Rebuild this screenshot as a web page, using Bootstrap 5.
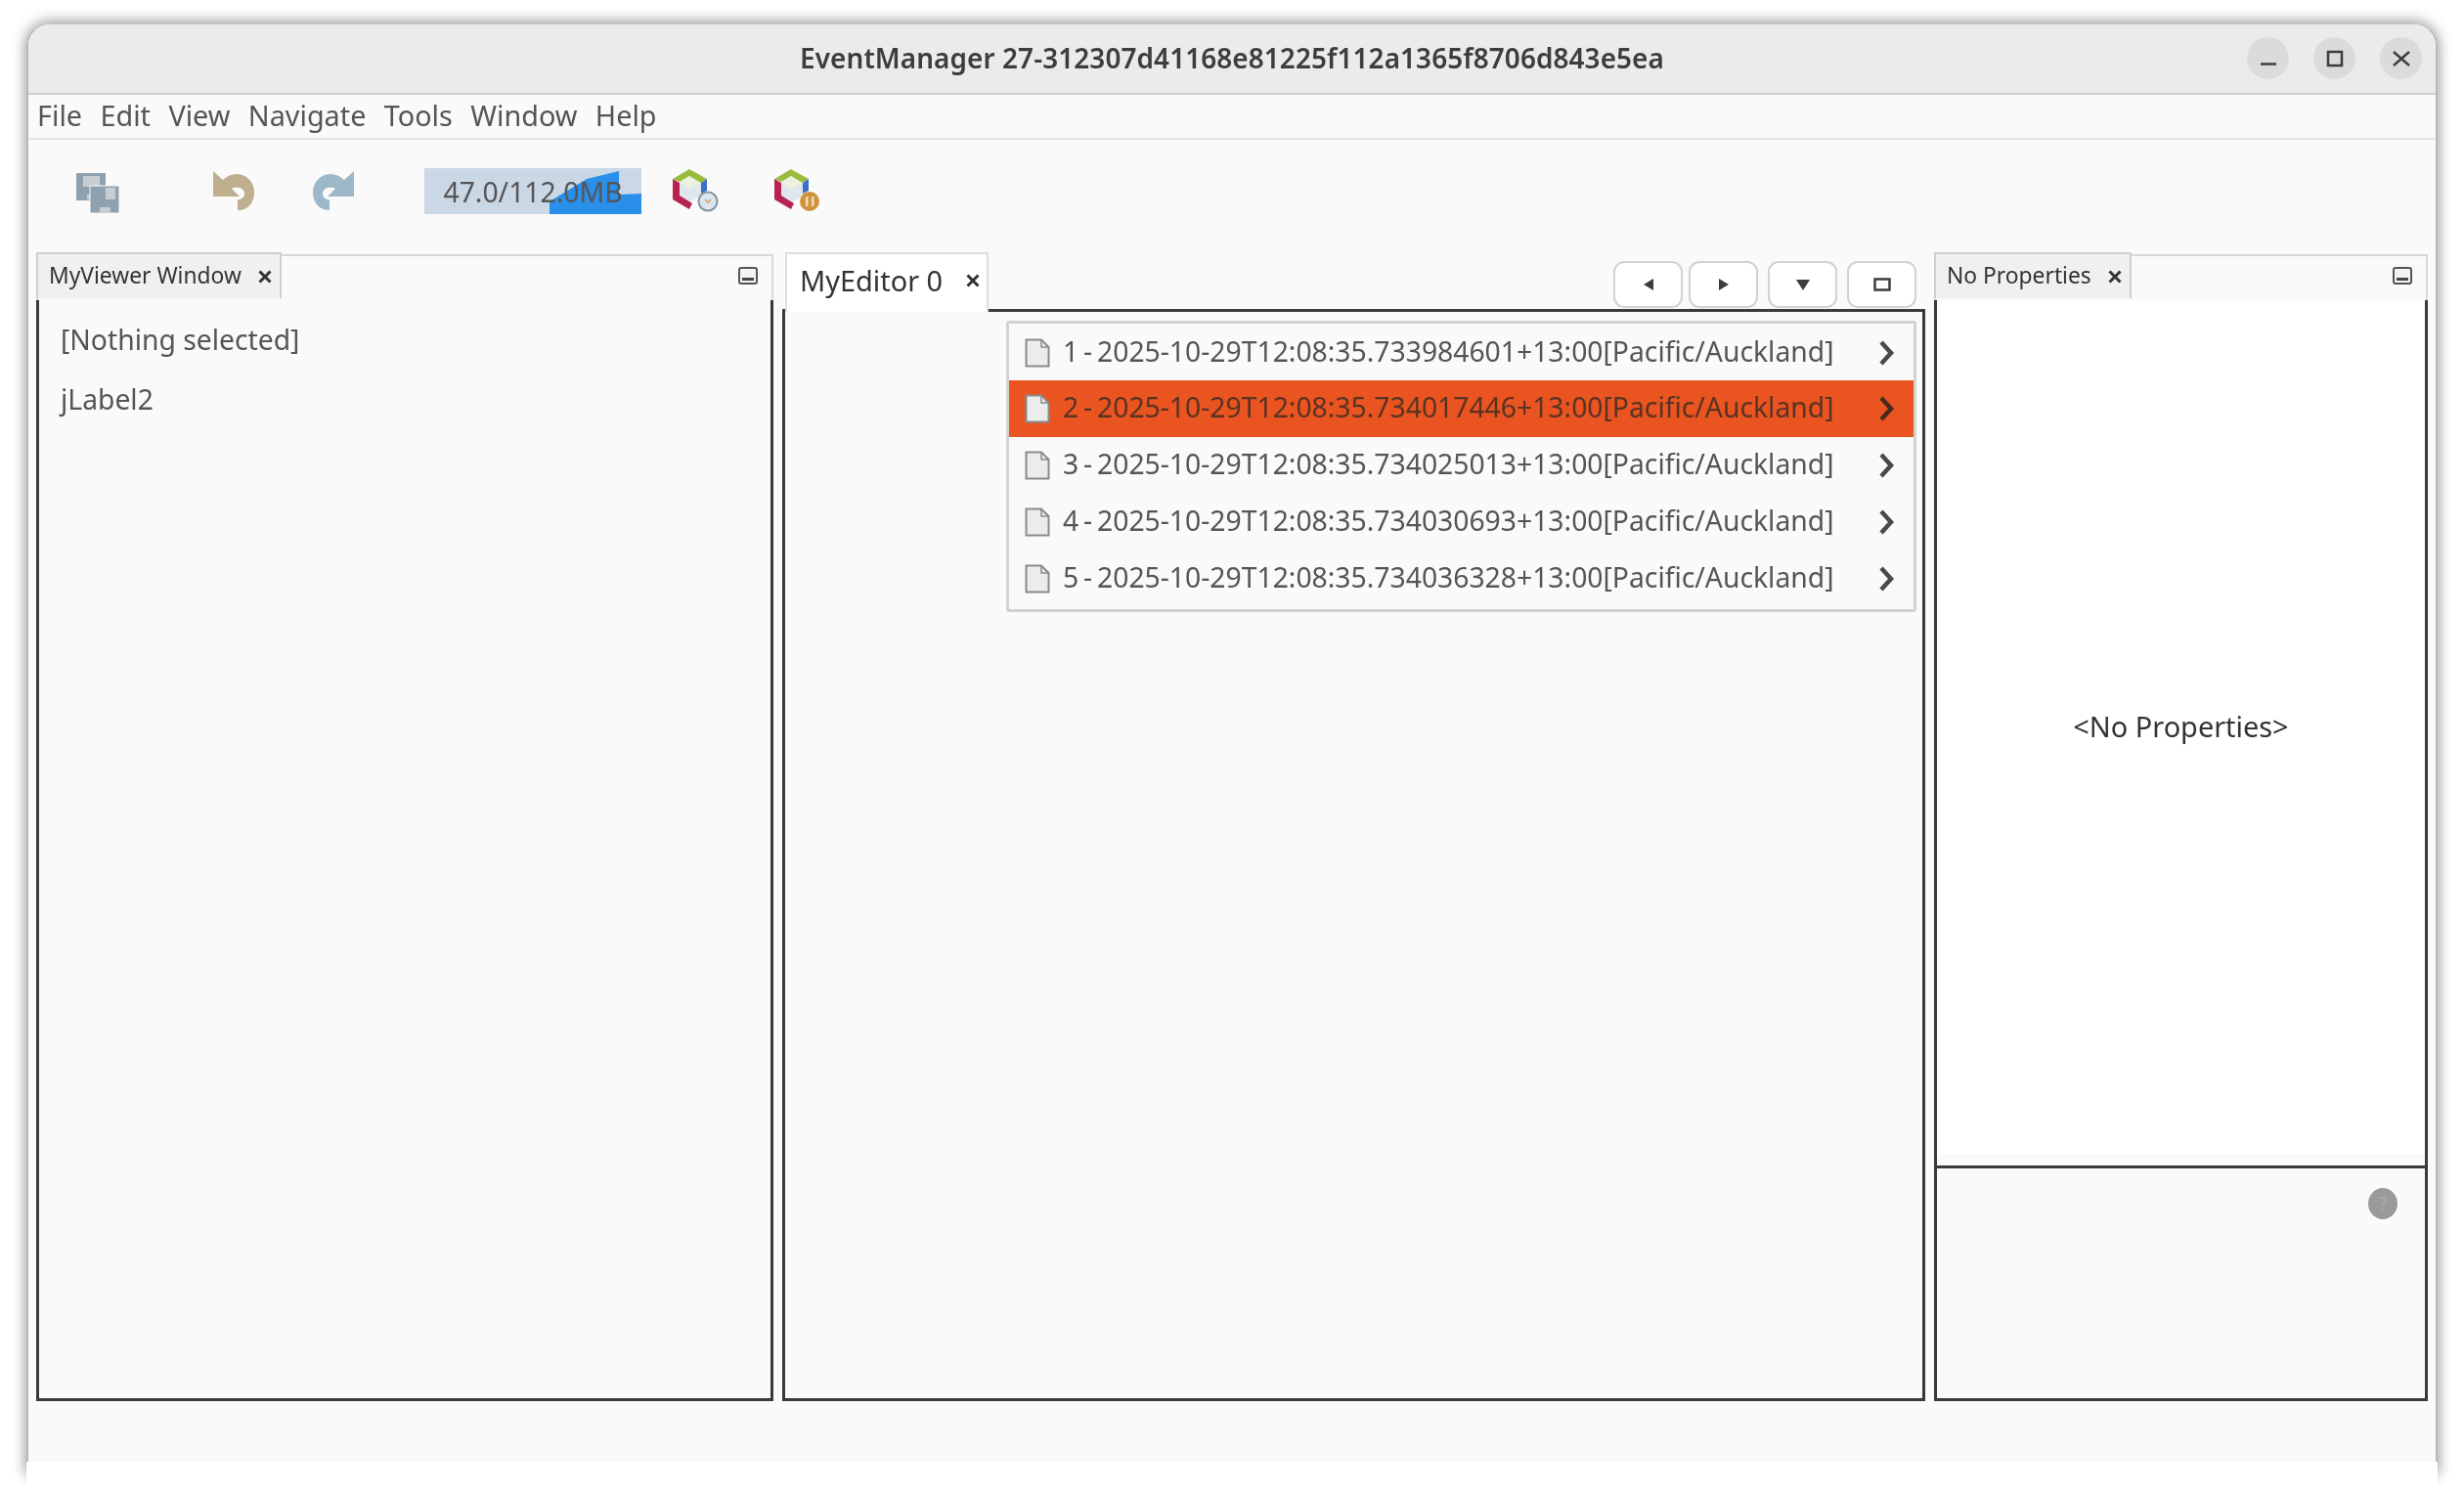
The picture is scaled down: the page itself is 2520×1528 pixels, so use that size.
<!DOCTYPE html>
<html lang="en">
<head>
<meta charset="utf-8">
<title>EventManager</title>
<link rel="stylesheet" href="https://cdn.jsdelivr.net/npm/bootstrap@5.3.0/dist/css/bootstrap.min.css">
<style>
html,body{height:100%;}
body{background:#fff;font-family:"Noto Sans","Liberation Sans",sans-serif;color:#555;padding:23px 27px 0 27px;overflow:hidden;position:relative;}
.win-shadow{position:absolute;left:27px;right:27px;top:23px;height:1484px;border-radius:24px 24px 0 0;box-shadow:0 0 14px 1px rgba(0,0,0,.42);}
.win-frame{position:relative;height:1472px;background:#fafafa;border-radius:24px 24px 0 0;display:flex;flex-direction:column;border-left:2px solid #b8b8b8;border-right:2px solid #b8b8b8;border-top:2px solid #c4c4c4;filter:blur(.5px);}
.win-frame::after{content:"";position:absolute;left:-2px;right:-2px;top:100%;height:60px;background:#fff;}
.title-bar{height:72px;flex:none;background:#ebebeb;border-bottom:2px solid #cfcfcf;border-radius:22px 22px 0 0;position:relative;}
.title-text{font-size:27.9px;font-weight:600;color:#3d3d3d;letter-spacing:.1px;}
.wc-btn{width:43px;height:43px;border-radius:50%;background:#dbdbdb;}
.wc-group{gap:25px;position:absolute;right:14px;top:13px;}
.menu-row{height:46px;flex:none;border-bottom:2px solid #e4e4e4;padding:0 0 1px 9px;gap:18.4px;font-size:28.8px;color:#555;background:#fafafa;}
.menu-row span{line-height:1;}
.tool-row{height:115px;flex:none;position:relative;}
.tb-ico{position:absolute;}
.mem-box{position:absolute;left:405px;top:29px;width:222px;height:47px;padding-top:2px;background:#cad7e4;font-size:28.3px;color:#555;}
.mem-box svg{position:absolute;left:0;top:0;}
.mem-box span{position:relative;}
.panel-row{flex:1;min-height:0;padding:0 7px 0 8px;gap:9px;}
.dock{display:flex;flex-direction:column;min-height:0;}
.dock-l{width:754px;}
.dock-c{width:1169px;}
.dock-r{width:505px;}
.dock-head{height:47px;flex:none;border-top:2px solid #d8d8d8;border-left:2px solid #d8d8d8;border-right:2px solid #d8d8d8;margin-top:2px;position:relative;}
.tab-side{height:47px;margin-top:-4px;margin-left:-2px;background:#f0f0f0;border:2px solid #cfcfcf;border-bottom:0;font-size:22.8px;color:#333;gap:17px;padding:0 8px 0 11px;}
.tab-side svg{flex:none;}
.mini-ico{position:absolute;right:14px;top:11px;}
.dock-body{flex:1;min-height:0;border:3px solid #3a3a3a;border-top:0;position:relative;}
.c-head{height:58px;flex:none;padding-left:3px;position:relative;}
.tab-main{height:61px;background:#fff;border:2px solid #dedede;border-bottom:0;width:208px;font-size:28.9px;color:#333;padding:0 0 6px 13px;gap:24px;position:relative;z-index:2;margin-bottom:-3px;}
.nav-btn{width:71px;height:48px;padding:0;background:#fff;border:2px solid #d2d2d2;border-radius:11px;display:flex;align-items:center;justify-content:center;}
.nav-group{position:absolute;right:9px;top:9px;}
.nav-pair{gap:6px;margin-right:10px;}
.nav-solo{margin-right:10px;}
.c-body{flex:1;border:3px solid #3a3a3a;position:relative;}
.item-pop{position:absolute;left:226px;top:9px;width:931px;height:298px;background:#fafafa;border:3px solid #d2d2d2;border-radius:3px;padding:1px 0;}
.item-pop .list-group-item{height:58px;background:transparent;border:0;border-radius:0;color:#555;font-size:28.3px;padding:0 19px 0 16px;display:flex;align-items:center;}
.item-pop .list-group-item.active{background:#e95420;color:#5a3323;}
.row-text{margin-left:13px;padding-bottom:3px;white-space:nowrap;flex:1;word-spacing:-2.5px;}
.label-line{font-size:28.3px;color:#555;line-height:1;}
.sel-label{padding:26px 0 0 22px;gap:33px;}
.prop-top{flex:1;background:#fff;min-height:0;font-size:28.9px;color:#333;padding-bottom:2px;}
.prop-gap{height:12px;flex:none;background:#fafafa;}
.prop-bot{height:238px;flex:none;border-top:3px solid #3a3a3a;padding:20px 28px 0 0;}
.help-dot{width:30px;height:32px;border-radius:50%;background:#9a9a9a;color:#aaa;font-size:20px;line-height:32px;text-align:center;}
.status-row{height:62px;flex:none;}
</style>
</head>
<body>
<div class="win-shadow"></div>
<div class="win-frame">
  <div class="title-bar d-flex align-items-center justify-content-center">
    <span class="title-text">EventManager 27-312307d41168e81225f112a1365f8706d843e5ea</span>
    <div class="wc-group d-flex">
      <div class="wc-btn d-flex align-items-center justify-content-center"><svg width="18" height="18"><path d="M1 14.500H17" stroke="#3d3d3d" stroke-width="2.500"/></svg></div>
      <div class="wc-btn d-flex align-items-center justify-content-center"><svg width="18" height="18"><rect x="2" y="2" width="14" height="14" fill="none" stroke="#3d3d3d" stroke-width="2.500"/></svg></div>
      <div class="wc-btn d-flex align-items-center justify-content-center"><svg width="18" height="18"><path d="M1 2L17 16M17 2L1 16" stroke="#3d3d3d" stroke-width="2.500"/></svg></div>
    </div>
  </div>
  <div class="menu-row d-flex align-items-center">
    <span>File</span><span>Edit</span><span>View</span><span>Navigate</span><span>Tools</span><span>Window</span><span>Help</span>
  </div>
  <div class="tool-row">
    <svg class="tb-ico" style="left:48px;top:32px" width="46" height="44" viewBox="0 0 46 44">
      <path d="M1 2H31V30H1Z" fill="#8fa1ae"/><rect x="8" y="5" width="17" height="11" fill="#c6ced4"/><rect x="12" y="24" width="10" height="5" fill="#c6ced4"/>
      <path d="M15 15H45V43H15Z" fill="#8fa1ae" stroke="#fafafa"/><rect x="31" y="17" width="10" height="12" fill="#c6ced4"/><rect x="25" y="37" width="11" height="5" fill="#c6ced4"/>
    </svg>
    <svg class="tb-ico" style="left:189px;top:32px" width="44" height="42" viewBox="0 0 44 42"><path d="M0 0V26H27L19 18C22 15.500 32 16 32 23C32 27 29 29 25 29.500V40C36 40 42 32 42 22C42 10 33 3 24 3C19 3 14 5 10 9Z" fill="#bfae90"/></svg>
    <svg class="tb-ico" style="left:291px;top:32px" width="44" height="42" viewBox="0 0 44 42"><g transform="translate(42 0) scale(-1 1)"><path d="M0 0V26H27L19 18C22 15.500 32 16 32 23C32 27 29 29 25 29.500V40C36 40 42 32 42 22C42 10 33 3 24 3C19 3 14 5 10 9Z" fill="#9db8c8"/></g></svg>
    <div class="mem-box d-flex align-items-center justify-content-center">
      <svg width="222" height="47"><path d="M128 47V34L143 25L166 11L199 3V27L222 26V47Z" fill="#2a8fea"/></svg>
      <span>47.0/112.0MB</span>
    </div>
    <svg class="tb-ico" style="left:659px;top:30px" width="47" height="44" viewBox="0 0 47 44">
      <path d="M17 8L29 14V27L17 34L7 28V14Z" fill="#dfe7ee"/><path d="M17 8L29 14L17 20L7 14Z" fill="#ebf0df"/>
      <path d="M17 0L35 10L29 14L17 7L7 13L0 10Z" fill="#9bbb3c"/><path d="M0 10L7 14V27L20 35L17 41L0 31Z" fill="#b8234f"/><path d="M35 10V22L29 25V14Z" fill="#3b6fc6"/>
      <circle cx="36" cy="33" r="9.500" fill="#d9e5f0" stroke="#87939b" stroke-width="2"/><path d="M33 31L36 34L39 31" fill="none" stroke="#e59a5a" stroke-width="1.500"/>
    </svg>
    <svg class="tb-ico" style="left:763px;top:30px" width="47" height="44" viewBox="0 0 47 44">
      <path d="M17 8L29 14V27L17 34L7 28V14Z" fill="#dfe7ee"/><path d="M17 8L29 14L17 20L7 14Z" fill="#ebf0df"/>
      <path d="M17 0L35 10L29 14L17 7L7 13L0 10Z" fill="#9bbb3c"/><path d="M0 10L7 14V27L20 35L17 41L0 31Z" fill="#b8234f"/><path d="M35 10V22L29 25V14Z" fill="#3b6fc6"/>
      <circle cx="36" cy="33" r="10" fill="#d0923a"/><rect x="32" y="28" width="2.500" height="10" fill="#f0dcb8"/><rect x="38" y="28" width="2.500" height="10" fill="#f0dcb8"/>
    </svg>
  </div>
  <div class="panel-row d-flex">
    <div class="dock dock-l">
      <div class="dock-head">
        <div class="tab-side d-inline-flex align-items-center"><span>MyViewer Window</span><svg width="14" height="14"><path d="M1.500 1.500L12.500 12.500M12.500 1.500L1.500 12.500" stroke="#333" stroke-width="3"/></svg></div>
        <svg class="mini-ico" width="20" height="18"><rect x="1" y="1" width="18" height="16" rx="2" fill="#f4f4f4" stroke="#555" stroke-width="2"/><rect x="4" y="11" width="12" height="3" fill="#444"/></svg>
      </div>
      <div class="dock-body d-flex flex-column sel-label">
        <div class="label-line">[Nothing selected]</div>
        <div class="label-line">jLabel2</div>
      </div>
    </div>
    <div class="dock dock-c">
      <div class="c-head d-flex align-items-end">
        <div class="tab-main d-flex align-items-center"><span>MyEditor 0</span><svg width="14" height="14"><path d="M1.500 1.500L12.500 12.500M12.500 1.500L1.500 12.500" stroke="#333" stroke-width="3"/></svg></div>
        <div class="nav-group d-flex">
          <div class="d-flex nav-pair">
            <button class="nav-btn btn" type="button" aria-label="Previous"><svg width="14" height="14"><path d="M12 1V13L2 7Z" fill="#3d3d3d"/></svg></button>
            <button class="nav-btn btn" type="button" aria-label="Next"><svg width="14" height="14"><path d="M2 1V13L12 7Z" fill="#3d3d3d"/></svg></button>
          </div>
          <button class="nav-btn nav-solo btn" type="button" aria-label="Tabs"><svg width="16" height="14"><path d="M1 2H15L8 13Z" fill="#3d3d3d"/></svg></button>
          <button class="nav-btn btn" type="button" aria-label="Maximize"><svg width="18" height="14"><rect x="1.500" y="1.500" width="15" height="11" fill="none" stroke="#3d3d3d" stroke-width="2.500"/></svg></button>
        </div>
      </div>
      <div class="c-body">
        <div class="item-pop list-group">
          <div class="list-group-item"><svg width="26" height="30"><path d="M1.500 1.500H17L24.500 9V28.500H1.500Z" fill="#ececec" stroke="#8a8a8a" stroke-width="2"/><path d="M17 1.500V9H24.500" fill="none" stroke="#8a8a8a" stroke-width="1.500"/></svg><span class="row-text">1 - 2025-10-29T12:08:35.733984601+13:00[Pacific/Auckland]</span><svg width="18" height="28"><path d="M4 3L14 14L4 25" fill="none" stroke="#4a4a4a" stroke-width="4.500"/></svg></div>
          <div class="list-group-item active"><svg width="26" height="30"><path d="M1.500 1.500H17L24.500 9V28.500H1.500Z" fill="#ececec" stroke="#8a8a8a" stroke-width="2"/><path d="M17 1.500V9H24.500" fill="none" stroke="#8a8a8a" stroke-width="1.500"/></svg><span class="row-text">2 - 2025-10-29T12:08:35.734017446+13:00[Pacific/Auckland]</span><svg width="18" height="28"><path d="M4 3L14 14L4 25" fill="none" stroke="#4a2a1a" stroke-width="4.500"/></svg></div>
          <div class="list-group-item"><svg width="26" height="30"><path d="M1.500 1.500H17L24.500 9V28.500H1.500Z" fill="#ececec" stroke="#8a8a8a" stroke-width="2"/><path d="M17 1.500V9H24.500" fill="none" stroke="#8a8a8a" stroke-width="1.500"/></svg><span class="row-text">3 - 2025-10-29T12:08:35.734025013+13:00[Pacific/Auckland]</span><svg width="18" height="28"><path d="M4 3L14 14L4 25" fill="none" stroke="#4a4a4a" stroke-width="4.500"/></svg></div>
          <div class="list-group-item"><svg width="26" height="30"><path d="M1.500 1.500H17L24.500 9V28.500H1.500Z" fill="#ececec" stroke="#8a8a8a" stroke-width="2"/><path d="M17 1.500V9H24.500" fill="none" stroke="#8a8a8a" stroke-width="1.500"/></svg><span class="row-text">4 - 2025-10-29T12:08:35.734030693+13:00[Pacific/Auckland]</span><svg width="18" height="28"><path d="M4 3L14 14L4 25" fill="none" stroke="#4a4a4a" stroke-width="4.500"/></svg></div>
          <div class="list-group-item"><svg width="26" height="30"><path d="M1.500 1.500H17L24.500 9V28.500H1.500Z" fill="#ececec" stroke="#8a8a8a" stroke-width="2"/><path d="M17 1.500V9H24.500" fill="none" stroke="#8a8a8a" stroke-width="1.500"/></svg><span class="row-text">5 - 2025-10-29T12:08:35.734036328+13:00[Pacific/Auckland]</span><svg width="18" height="28"><path d="M4 3L14 14L4 25" fill="none" stroke="#4a4a4a" stroke-width="4.500"/></svg></div>
        </div>
      </div>
    </div>
    <div class="dock dock-r">
      <div class="dock-head">
        <div class="tab-side d-inline-flex align-items-center"><span>No Properties</span><svg width="14" height="14"><path d="M1.500 1.500L12.500 12.500M12.500 1.500L1.500 12.500" stroke="#333" stroke-width="3"/></svg></div>
        <svg class="mini-ico" width="20" height="18"><rect x="1" y="1" width="18" height="16" rx="2" fill="#f4f4f4" stroke="#555" stroke-width="2"/><rect x="4" y="11" width="12" height="3" fill="#444"/></svg>
      </div>
      <div class="dock-body d-flex flex-column">
        <div class="prop-top d-flex align-items-center justify-content-center">&lt;No Properties&gt;</div>
        <div class="prop-gap"></div>
        <div class="prop-bot d-flex justify-content-end align-items-start"><div class="help-dot">?</div></div>
      </div>
    </div>
  </div>
  <div class="status-row"></div>
</div>
<script src="https://cdn.jsdelivr.net/npm/bootstrap@5.3.0/dist/js/bootstrap.bundle.min.js"></script>
</body>
</html>
